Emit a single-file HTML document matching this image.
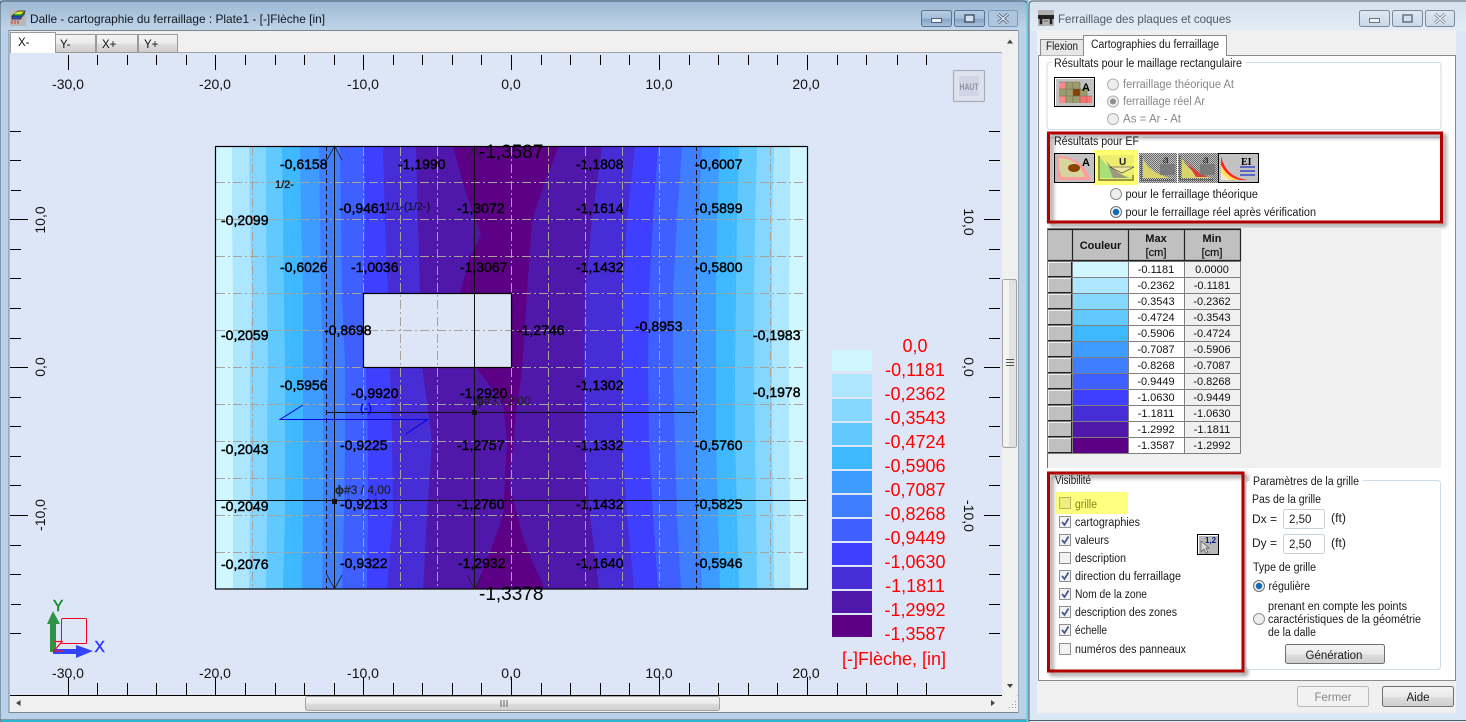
<!DOCTYPE html>
<html><head><meta charset="utf-8"><title>Dalle</title>
<style>
html,body{margin:0;padding:0;background:#b9d1ea;overflow:hidden}
svg{display:block;font-family:"Liberation Sans",sans-serif}
.v{font-size:14px;fill:#000;stroke:#000;stroke-width:.45}
.a{font-size:14px;fill:#111;text-anchor:middle}
.l{font-size:18px;fill:#f00;text-anchor:middle}
.t{font-size:11.5px;fill:#1a1a1a}
.d{font-size:11.5px;fill:#888}
.c{font-size:11px;fill:#111;text-anchor:middle}
.h{font-size:11px;fill:#111;text-anchor:middle;font-weight:bold}
</style></head><body>
<svg width="1466" height="722" viewBox="0 0 1466 722" xmlns="http://www.w3.org/2000/svg">
<defs>
<linearGradient id="tb" x1="0" y1="0" x2="0" y2="1"><stop offset="0" stop-color="#9ab6d3"/><stop offset="1" stop-color="#c1d5e9"/></linearGradient>
<linearGradient id="tb2" x1="0" y1="0" x2="0" y2="1"><stop offset="0" stop-color="#d3e0ee"/><stop offset="1" stop-color="#e3edf7"/></linearGradient>
<linearGradient id="btn" x1="0" y1="0" x2="0" y2="1"><stop offset="0" stop-color="#f4f4f4"/><stop offset=".5" stop-color="#ebebeb"/><stop offset=".55" stop-color="#dcdcdc"/><stop offset="1" stop-color="#cfcfcf"/></linearGradient>
<linearGradient id="wb" x1="0" y1="0" x2="0" y2="1"><stop offset="0" stop-color="#b9cde3"/><stop offset=".5" stop-color="#a3bcd8"/><stop offset=".55" stop-color="#84a3c6"/><stop offset="1" stop-color="#a9c3de"/></linearGradient>
<linearGradient id="wb2" x1="0" y1="0" x2="0" y2="1"><stop offset="0" stop-color="#dde8f3"/><stop offset=".5" stop-color="#d2dfed"/><stop offset="1" stop-color="#c9d8e9"/></linearGradient>
<pattern id="chk" width="2" height="2" patternUnits="userSpaceOnUse"><rect width="2" height="2" fill="#c4c4c4"/><rect width="1" height="1" fill="#6a6a6a"/><rect x="1" y="1" width="1" height="1" fill="#6a6a6a"/></pattern>
</defs>

<!-- LEFT WINDOW FRAME -->
<rect width="1030" height="722" fill="#b9d1ea"/>
<rect x="0" y="0" width="1028" height="31" fill="url(#tb)"/>
<path d="M0 722V5Q0 1 4 1H1023Q1027 1 1027 5V720H0" fill="none" stroke="#4a5a68" stroke-width="1"/>
<rect x="1" y="720" width="1027" height="2" fill="#2bb6cf"/>
<rect x="1026.500" y="2" width="1.500" height="720" fill="#49d3ea"/>
<rect x="9" y="30.500" width="1009" height="682" fill="#f0f0f0" stroke="#7f8488"/>

<!-- title icon -->
<rect x="10" y="10" width="16" height="16" fill="#b8b8b8"/>
<path d="M12 16L18 11H25L21 16Z" fill="#22c040" stroke="#222" stroke-width=".7"/>
<path d="M14 14L18 11.500H24L21 14Z" fill="#f4e020"/>
<path d="M12 16H21V19H12Z" fill="#3050d0" stroke="#222" stroke-width=".7"/>
<path d="M21 16L25 11V14L21 19Z" fill="#555"/>
<path d="M12 20V24M15 20V24M18 20V24" stroke="#d03030"/>
<text x="30" y="23" font-size="12" fill="#101820" textLength="295" lengthAdjust="spacingAndGlyphs">Dalle - cartographie du ferraillage : Plate1 - [-]Flèche [in]</text>

<!-- window controls left -->
<rect x="921.500" y="10.500" width="30" height="16" rx="2" fill="url(#wb)" stroke="#5a7391"/>
<rect x="931.500" y="18.500" width="10" height="4" fill="#eef3f8" stroke="#4d6077"/>
<rect x="954.500" y="10.500" width="30" height="16" rx="2" fill="url(#wb)" stroke="#5a7391"/>
<rect x="965" y="15" width="9" height="7" fill="#d5e0ec" stroke="#33485f" stroke-width="1.300"/>
<rect x="988.500" y="10.500" width="29" height="16" rx="2" fill="#aec5de" stroke="#7f9ab8"/>
<path d="M998 14L1008 23M1008 14L998 23" stroke="#4d6580" stroke-width="3"/><path d="M998 14L1008 23M1008 14L998 23" stroke="#e6edf5" stroke-width="1.200"/>

<!-- tabs left -->
<rect x="10" y="31" width="992" height="22" fill="#f0f0f0"/>
<rect x="55" y="52" width="947" height="1" fill="#a0a4a8"/>
<rect x="55.500" y="34.500" width="40" height="18" fill="url(#btn)" stroke="#9a9a9a"/>
<rect x="96.500" y="34.500" width="41" height="18" fill="url(#btn)" stroke="#9a9a9a"/>
<rect x="138.500" y="34.500" width="39" height="18" fill="url(#btn)" stroke="#9a9a9a"/>
<path d="M10.500 53V32.500H55.500V53" fill="#fff" stroke="#9a9a9a"/>
<text x="18" y="46" font-size="11.500" fill="#111">X-</text>
<text x="60" y="48" font-size="11.500" fill="#111">Y-</text>
<text x="102" y="48" font-size="11.500" fill="#111">X+</text>
<text x="144" y="48" font-size="11.500" fill="#111">Y+</text>

<!-- CANVAS -->
<rect x="10" y="53" width="992" height="642" fill="#dde6f7"/>

<!-- plate bands -->
<rect x="215" y="146" width="592" height="443" fill="#d0f6ff"/>
<polygon fill="#ace6ff" points="232,146 232,220 233,293 233,367 233,441 233,515 233,589 790,589 790,515 789,441 789,367 789,293 790,220 790,146"/>
<polygon fill="#85d7ff" points="249,146 250,220 252,293 250,367 250,441 250,515 249,589 774,589 773,515 772,441 772,367 772,293 772,220 774,146"/>
<polygon fill="#62c9ff" points="266,146 266,220 267,293 268,367 267,441 267,515 266,589 757,589 756,515 755,441 754,367 754,293 755,220 757,146"/>
<polygon fill="#3eb9ff" points="282,146 283,220 284,293 285,367 285,441 285,515 283,589 739,589 737,515 735,441 735,367 736,293 737,220 739,146"/>
<polygon fill="#3e9bff" points="300,146 301,220 303,293 303,367 303,441 303,515 302,589 720,589 718,515 716,441 716,367 716,293 717,220 720,146"/>
<polygon fill="#3f7fff" points="319,146 320,220 321,293 323,367 323,441 323,515 322,589 702,589 698,515 697,441 697,367 697,293 698,220 702,146"/>
<polygon fill="#3f60ff" points="340,146 341,220 342,293 345,367 345,441 344,515 342,589 681,589 677,515 675,441 673,367 673,293 677,220 682,146"/>
<polygon fill="#3f3fff" points="364,146 365,220 363,293 366,367 368,441 368,515 367,589 658,589 653,515 649,441 648,367 649,293 653,220 658,146"/>
<polygon fill="#472dd6" points="383,146 385,220 388,293 390,367 392,441 393,515 387,589 634,589 627,515 622,441 621,367 623,293 627,220 635,146"/>
<polygon fill="#5018aa" points="416,146 418,220 420,293 422,367 432,441 427,515 423,589 599,589 590,515 584,441 584,367 585,293 592,220 602,146"/>
<polygon fill="#5c0086" points="453,146 465,190 481,235 470,257 460,293 463,340 478,370 503,404 507,441 505,478 503,515 490,552 475,589 545,589 533,563 523,537 517,513 510,490 510,470 514,441 515,420 522,370 527,293 532,220 545,182 559,146"/>

<!-- hole fill -->
<rect x="363.500" y="293.500" width="148" height="74" fill="#dde6f7"/>

<!-- grid -->
<path fill="none" stroke="#a8a39d" stroke-width="1" stroke-dasharray="9 3 2 3" d="M252.500 147V589M289.500 147V589M363.500 147V293M400.500 147V589M437.500 147V589M474.500 147V589M511.500 147V293M511.500 368V589M548.500 147V589M585.500 147V589M622.500 147V589M659.500 147V589M733.500 147V589M770.500 147V589M363.500 368V589M216 182.500H806M216 219.500H806M216 256.500H806M216 293.500H806M216 330.500H806M216 367.500H806M216 404.500H806M216 441.500H806M216 478.500H806M216 515.500H806M216 552.500H806"/>
<path fill="none" stroke="#111" stroke-width="1" stroke-dasharray="5 3" d="M326.500 146V589M696.500 146V589"/>

<rect x="215.500" y="146.500" width="592" height="442.500" fill="none" stroke="#000" stroke-width="1.200"/>
<rect x="363.500" y="293.500" width="148" height="74" fill="none" stroke="#000" stroke-width="1.200"/>

<!-- reinforcement lines -->
<path fill="none" stroke="#111" stroke-width="1" d="M334.500 146V589M474.500 146V589M326 412.500H695M215 500.500H806"/>
<path fill="none" stroke="#222" stroke-width=".8" d="M327 160L334.500 146L342 160M467 160L474.500 146L482 160M327 575L334.500 589L342 575M467 575L474.500 589L482 575"/>
<rect x="472" y="410" width="5" height="5" fill="#111"/><rect x="332" y="499" width="5" height="5" fill="#111"/>
<path fill="none" stroke="#0000e0" stroke-width="1" d="M303 405L280 419.500H427.500L406 434"/>
<text x="360" y="412" font-size="12" fill="#0000e6" stroke="#0000e6" stroke-width=".3">(-)</text>
<text x="475" y="405" font-size="12" fill="#222" stroke="#222" stroke-width=".2"><tspan font-weight="bold">ϕ</tspan>#3 / 2,00</text>
<text x="335" y="494" font-size="12" fill="#222" stroke="#222" stroke-width=".2"><tspan font-weight="bold">ϕ</tspan>#3 / 4,00</text>

<!-- values -->
<g class="v">
<text x="280" y="169">-0,6158</text><text x="398" y="169">-1,1990</text><text x="576" y="169">-1,1808</text><text x="695" y="169">-0,6007</text>
<text x="339" y="213">-0,9461</text><text x="457" y="213">-1,3072</text><text x="576" y="213">-1,1614</text><text x="695" y="213">-0,5899</text>
<text x="221" y="225">-0,2099</text>
<text x="280" y="272">-0,6026</text><text x="351" y="272">-1,0036</text><text x="460" y="272">-1,3067</text><text x="576" y="272">-1,1432</text><text x="695" y="272">-0,5800</text>
<text x="324" y="335">-0,8698</text><text x="221" y="340">-0,2059</text><text x="517" y="335">-1,2746</text><text x="635" y="331">-0,8953</text><text x="753" y="340">-0,1983</text>
<text x="280" y="390">-0,5956</text><text x="351" y="398">-0,9920</text><text x="460" y="398">-1,2920</text><text x="576" y="390">-1,1302</text><text x="753" y="397">-0,1978</text>
<text x="221" y="454">-0,2043</text><text x="340" y="450">-0,9225</text><text x="457" y="450">-1,2757</text><text x="576" y="450">-1,1332</text><text x="695" y="450">-0,5760</text>
<text x="221" y="511">-0,2049</text><text x="340" y="509">-0,9213</text><text x="457" y="509">-1,2760</text><text x="576" y="509">-1,1432</text><text x="695" y="509">-0,5825</text>
<text x="221" y="569">-0,2076</text><text x="340" y="568">-0,9322</text><text x="458" y="568">-1,2932</text><text x="576" y="568">-1,1640</text><text x="695" y="568">-0,5946</text>
</g>
<text x="275" y="188" font-size="11" fill="#111" stroke="#111" stroke-width=".35">1/2-</text>
<text x="385" y="210" font-size="11" fill="#14143c" stroke="#14143c" stroke-width=".3">1/1-(1/2-)</text>
<text x="479" y="158" font-size="19" fill="#000">-1,3587</text>
<text x="479" y="600" font-size="19" fill="#000">-1,3378</text>

<!-- axis ticks -->
<path fill="none" stroke="#000" stroke-width="1" d="M68.500 55V70M215.500 55V70M363.500 55V70M511.500 55V70M659.500 55V70M807.500 55V70M97.500 55V65M127.500 55V65M156.500 55V65M186.500 55V65M245.500 55V65M275.500 55V65M304.500 55V65M334.500 55V65M393.500 55V65M422.500 55V65M452.500 55V65M481.500 55V65M541.500 55V65M570.500 55V65M600.500 55V65M629.500 55V65M689.500 55V65M718.500 55V65M748.500 55V65M777.500 55V65M837.500 55V65M866.500 55V65M897.500 55V65M926.500 55V65"/>
<path fill="none" stroke="#000" stroke-width="1" d="M68.500 677V695M215.500 677V695M363.500 677V695M511.500 677V695M659.500 677V695M807.500 677V695M97.500 683V695M127.500 683V695M156.500 683V695M186.500 683V695M245.500 683V695M275.500 683V695M304.500 683V695M334.500 683V695M393.500 683V695M422.500 683V695M452.500 683V695M481.500 683V695M541.500 683V695M570.500 683V695M600.500 683V695M629.500 683V695M689.500 683V695M718.500 683V695M748.500 683V695M777.500 683V695M837.500 683V695M866.500 683V695M897.500 683V695M926.500 683V695"/>
<path fill="none" stroke="#000" stroke-width="1" d="M10 219.500H28M10 367.500H28M10 515.500H28M10 131.500H21M10 160.500H21M11 190.500H21M10 249.500H21M10 278.500H21M10 308.500H21M10 338.500H21M10 397.500H21M10 426.500H21M10 456.500H21M10 485.500H21M10 545.500H21M10 574.500H21M11 604.500H21M10 633.500H21"/>
<path fill="none" stroke="#000" stroke-width="1" d="M984 219.500H1000M984 367.500H1000M984 515.500H1000M989 131.500H1000M989 160.500H1000M989 190.500H1000M989 249.500H1000M989 278.500H1000M989 308.500H1000M989 338.500H1000M989 397.500H1000M989 426.500H1000M989 456.500H1000M989 485.500H1000M989 545.500H1000M989 574.500H1000M989 604.500H1000M989 633.500H1000"/>
<g class="a">
<text x="68" y="89">-30,0</text><text x="215" y="89">-20,0</text><text x="363" y="89">-10,0</text><text x="511" y="89">0,0</text><text x="659" y="89">10,0</text><text x="806" y="89">20,0</text>
<text x="68" y="678">-30,0</text><text x="215" y="678">-20,0</text><text x="363" y="678">-10,0</text><text x="511" y="678">0,0</text><text x="659" y="678">10,0</text><text x="806" y="678">20,0</text>
<text transform="translate(45,220) rotate(-90)">10,0</text><text transform="translate(45,367) rotate(-90)">0,0</text><text transform="translate(45,515) rotate(-90)">-10,0</text>
<text transform="translate(964,222) rotate(90)">10,0</text><text transform="translate(964,367) rotate(90)">0,0</text><text transform="translate(964,516) rotate(90)">-10,0</text>
</g>

<!-- HAUT cube -->
<rect x="953.500" y="70.500" width="31" height="31" rx="1" fill="#dde2ee" stroke="#a8aebc" stroke-width="1.200"/>
<rect x="959" y="76" width="20" height="20" fill="#d0d6e5"/>
<text x="969" y="90" font-size="9" font-weight="bold" fill="#8d93a3" text-anchor="middle" textLength="19" lengthAdjust="spacingAndGlyphs">HAUT</text>

<!-- axis glyph -->
<path d="M50 652V624H47L53 611L60 624H56V652Z" fill="#2e9444"/>
<rect x="61.500" y="618.500" width="25" height="25" rx="1" fill="none" stroke="#f00222" stroke-width="1"/>
<path d="M53 654V649H76V645L93 651L76 658V654Z" fill="#3344ff"/>
<path d="M54 641.500H62L54 651H63" fill="none" stroke="#f01020" stroke-width="1.300"/>
<text x="53" y="611" font-size="15.500" fill="#119028" stroke="#119028" stroke-width=".5">Y</text>
<text x="94.500" y="652" font-size="15.500" fill="#2a3cff" stroke="#2a3cff" stroke-width=".5">X</text>

<!-- legend -->
<rect x="832" y="350" width="40" height="21" fill="#d0f6ff"/><rect x="832" y="374" width="40" height="23" fill="#ace6ff"/><rect x="832" y="399" width="40" height="22" fill="#85d7ff"/><rect x="832" y="423" width="40" height="22" fill="#62c9ff"/><rect x="832" y="447" width="40" height="22" fill="#3eb9ff"/><rect x="832" y="471" width="40" height="22" fill="#3e9bff"/><rect x="832" y="495" width="40" height="22" fill="#3f7fff"/><rect x="832" y="519" width="40" height="22" fill="#3f60ff"/><rect x="832" y="543" width="40" height="22" fill="#3f3fff"/><rect x="832" y="567" width="40" height="22" fill="#472dd6"/><rect x="832" y="591" width="40" height="22" fill="#5018aa"/><rect x="832" y="615" width="40" height="22" fill="#5c0086"/>
<g class="l">
<text x="915" y="352">0,0</text><text x="915" y="376">-0,1181</text><text x="915" y="400">-0,2362</text><text x="915" y="424">-0,3543</text><text x="915" y="448">-0,4724</text><text x="915" y="472">-0,5906</text><text x="915" y="496">-0,7087</text><text x="915" y="520">-0,8268</text><text x="915" y="544">-0,9449</text><text x="915" y="568">-1,0630</text><text x="915" y="592">-1,1811</text><text x="915" y="616">-1,2992</text><text x="915" y="640">-1,3587</text>
</g>
<text x="894" y="665" font-size="18" fill="#f00" text-anchor="middle">[-]Flèche, [in]</text>

<!-- vertical scrollbar -->
<rect x="1002" y="31" width="16" height="664" fill="#f0f0f0"/>
<rect x="1002.500" y="279.500" width="14" height="168" rx="2" fill="#e2e2e2" stroke="#a4a4a4"/>
<rect x="1003" y="280" width="6" height="166" fill="#f4f4f4"/>
<path d="M1006 359.500H1014M1006 362.500H1014M1006 365.500H1014" stroke="#555"/>
<path d="M1007 43.500H1013L1010 39.500Z" fill="#444"/><path d="M1007 684H1013L1010 688Z" fill="#444"/>
<!-- horizontal scrollbar -->
<rect x="10" y="695" width="992" height="1" fill="#000"/>
<rect x="10" y="696" width="1008" height="16" fill="#f0f0f0"/>
<rect x="305.500" y="696.500" width="414" height="14" rx="2" fill="url(#btn)" stroke="#a4a4a4"/>
<path d="M501 700V707M504 700V707M507 700V707" stroke="#666"/>
<path d="M20.500 700V706L16 703Z" fill="#444"/><path d="M991 700V706L995 703Z" fill="#444"/>
<path d="M1009 707h1v1h-1zM1012 704h1v1h-1zM1012 707h1v1h-1zM1015 701h1v1h-1zM1015 704h1v1h-1zM1015 707h1v1h-1z" fill="#999"/>

<!-- RIGHT WINDOW -->
<rect x="1029" y="0" width="437" height="722" fill="#dbe7f4"/>
<rect x="1029" y="1" width="437" height="30" fill="url(#tb2)"/>
<path d="M1029 722V5Q1029 1 1033 1H1466M1029 720.500H1466" fill="none" stroke="#555d66" stroke-width="1"/>
<rect x="1037" y="30" width="419" height="683" fill="#f0f0f0"/>
<!-- title -->
<rect x="1038" y="10" width="16" height="16" fill="#b0b0b0"/>
<path d="M1038 15H1054V19H1038Z" fill="#222"/><path d="M1040 19V24H1042V19ZM1050 19V24H1052V19ZM1044 21H1048" fill="#222" stroke="#222" stroke-width=".6"/>
<text x="1058" y="23" font-size="12" fill="#4f5963" textLength="173" lengthAdjust="spacingAndGlyphs">Ferraillage des plaques et coques</text>
<rect x="1359.500" y="10.500" width="30" height="16" rx="2" fill="url(#wb2)" stroke="#7c8a98"/>
<rect x="1369.500" y="18.500" width="10" height="4" fill="#f0f3f7" stroke="#6a7683"/>
<rect x="1392.500" y="10.500" width="30" height="16" rx="2" fill="url(#wb2)" stroke="#7c8a98"/>
<rect x="1403" y="15" width="9" height="7" fill="none" stroke="#55616e" stroke-width="1.300"/>
<rect x="1425.500" y="10.500" width="29" height="16" rx="2" fill="url(#wb2)" stroke="#7c8a98"/>
<path d="M1435 14L1445 23M1445 14L1435 23" stroke="#7d8a97" stroke-width="3"/><path d="M1435 14L1445 23M1445 14L1435 23" stroke="#f2f5f8" stroke-width="1.200"/>

<!-- tabs panel -->
<rect x="1038.500" y="55.500" width="417" height="625" fill="#fff" stroke="#8a8a8a"/>
<path d="M1040.500 55.500V39.500H1084V55.500" fill="#e7e7e7" stroke="#8a8a8a"/>
<path d="M1083.500 56V35.500H1226.500V56" fill="#fff" stroke="#8a8a8a"/>
<rect x="1084" y="54" width="142" height="3" fill="#fff"/>
<text x="1046" y="50" class="t" textLength="32" lengthAdjust="spacingAndGlyphs">Flexion</text>
<text x="1091" y="48" class="t" textLength="128" lengthAdjust="spacingAndGlyphs">Cartographies du ferraillage</text>

<!-- group 1 -->
<rect x="1047" y="62.500" width="394" height="67" rx="3" fill="#fff" stroke="#d0dbe8"/>
<rect x="1052" y="58" width="194" height="10" fill="#fff"/>
<text x="1054" y="67" class="t" textLength="188" lengthAdjust="spacingAndGlyphs">Résultats pour le maillage rectangulaire</text>
<!-- icon A grid -->
<rect x="1054" y="77" width="41" height="30" fill="#000"/><rect x="1055" y="78" width="39" height="28" fill="#fff"/>
<rect x="1056" y="79" width="38" height="27" fill="#c2c2c2"/>
<path d="M1059 82h7v7h-7z" fill="#ff8a8a"/><path d="M1066 82h7v7h-7zM1073 82h7v7h-7z" fill="#9c9c6e"/>
<path d="M1059 89h7v7h-7zM1066 89h7v7h-7zM1080 89h7v7h-7z" fill="#9c9c6e"/><path d="M1073 89h7v7h-7z" fill="#8b4000"/>
<path d="M1059 96h7v7h-7z" fill="#ff8a8a"/><path d="M1066 96h7v7h-7zM1073 96h7v7h-7z" fill="#9c9c6e"/><path d="M1080 96h7v7h-7z" fill="#ff6a6a"/><path d="M1087 96h5v7h-5z" fill="#ff7a7a"/>
<path d="M1059 82H1080M1059 89H1087M1059 96H1092M1066 82V103M1073 82V103M1080 82V103M1087 89V103" stroke="#6e6e50" stroke-width=".6" fill="none"/>
<text x="1082" y="91" font-size="11" font-weight="bold" fill="#000">A</text>
<g fill="#eee" stroke="#b0b0b0"><circle cx="1113" cy="84.500" r="5.500"/><circle cx="1113" cy="101.500" r="5.500"/><circle cx="1113" cy="119" r="5.500"/></g>
<circle cx="1113" cy="101.500" r="3" fill="#8f8f8f"/>
<text x="1123" y="88" class="d" textLength="111" lengthAdjust="spacingAndGlyphs">ferraillage théorique At</text>
<text x="1123" y="105" class="d" textLength="82" lengthAdjust="spacingAndGlyphs">ferraillage réel Ar</text>
<text x="1123" y="122.500" class="d" textLength="58" lengthAdjust="spacingAndGlyphs">As = Ar - At</text>

<!-- group EF -->
<rect x="1047" y="137.500" width="394" height="84" fill="#fff" stroke="#d0dbe8"/>
<rect x="1052" y="134" width="90" height="10" fill="#fff"/>
<text x="1054" y="145" class="t" textLength="85" lengthAdjust="spacingAndGlyphs">Résultats pour EF</text>
<rect x="1094" y="150" width="44" height="35" fill="#ffff70"/>
<!-- icon 1 -->
<rect x="1054" y="153" width="41" height="30" fill="#000"/><rect x="1055" y="154" width="39" height="28" fill="#c2c2c2"/>
<path d="M1057 156Q1082 156 1091 180H1057Z" fill="#ff9c9c"/><path d="M1059 158Q1078 158 1085 177H1062Q1058 170 1059 158Z" fill="#d8d4a0"/>
<ellipse cx="1074" cy="168" rx="6" ry="4" fill="#8b4500"/><text x="1082" y="166" font-size="11" font-weight="bold">A</text>
<!-- icon 2 -->
<rect x="1098" y="155" width="36" height="26" fill="#eded70"/>
<path d="M1099 156V180H1133V175" fill="none" stroke="#6a6a20" stroke-width="1.200"/>
<path d="M1100 157Q1110 172 1132 178H1100Z" fill="#a8e078"/><path d="M1106 160Q1112 170 1128 178H1113Z" fill="#9a9a80"/>
<path d="M1110 167H1134L1122 173Z" fill="#f0e8a0" stroke="#333" stroke-width=".6"/><text x="1119" y="165" font-size="10" font-weight="bold" fill="#222">U</text>
<!-- icon 3,4 disabled -->
<rect x="1139" y="153" width="38" height="30" fill="url(#chk)"/>
<path d="M1141 156V180H1174" fill="none" stroke="#111" stroke-dasharray="1 1"/><path d="M1143 158Q1148 172 1170 178H1143Z" fill="#d8d46a"/><rect x="1160" y="164" width="15" height="11" fill="#7a7a7a"/><text x="1163" y="163" font-size="10" font-style="italic" fill="#222">a</text>
<rect x="1178" y="153" width="40" height="30" fill="url(#chk)"/>
<path d="M1180 156V180H1214" fill="none" stroke="#111" stroke-dasharray="1 1"/><path d="M1182 158Q1188 174 1212 178H1182Z" fill="#d8d46a"/><path d="M1184 158Q1192 170 1208 177H1196Z" fill="#d84040"/><rect x="1200" y="164" width="15" height="11" fill="#7a7a7a"/><text x="1203" y="163" font-size="10" font-style="italic" fill="#222">a</text>
<!-- icon 5 -->
<rect x="1218" y="153" width="41" height="30" fill="#000"/><rect x="1219" y="154" width="39" height="28" fill="#c2c2c2"/>
<path d="M1221 156Q1226 178 1248 180H1221Z" fill="#ff2020"/><path d="M1221 165Q1228 178 1240 180H1221Z" fill="#ffe060"/><path d="M1221 172Q1225 178 1232 180H1221Z" fill="#f0e8d0"/>
<text x="1241" y="165" font-size="10" font-weight="bold" font-family="Liberation Serif">EI</text>
<path d="M1240 167H1255M1240 171H1255M1240 175H1255" stroke="#2030c0" stroke-width="1.200"/>
<!-- radios EF -->
<circle cx="1116" cy="194" r="5.500" fill="#eee" stroke="#8e8e8e"/>
<circle cx="1116" cy="212" r="5.500" fill="#eee" stroke="#707070"/><circle cx="1116" cy="212" r="3.200" fill="#0d6eb5"/>
<text x="1125.500" y="198" class="t" textLength="132.500" lengthAdjust="spacingAndGlyphs">pour le ferraillage théorique</text>
<text x="1125.500" y="216" class="t" textLength="190.500" lengthAdjust="spacingAndGlyphs">pour le ferraillage réel après vérification</text>
<rect x="1048.500" y="133" width="393" height="89" fill="none" stroke="#b00000" stroke-width="3" style="filter:drop-shadow(3px 3px 2px rgba(0,0,0,.5))"/>

<!-- TABLE -->
<rect x="1047" y="228" width="394" height="240" fill="#f0f0f0"/>
<path d="M1047.500 228V468" stroke="#707070"/>
<rect x="1047" y="228" width="194" height="226" fill="#7f7f7f"/>
<rect x="1048" y="230" width="193" height="31" fill="#c0c0c0"/>
<path d="M1072.500 229V261M1128.500 229V261M1184.500 229V261M1240.500 229V261M1048 260.500H1241M1048 229.500H1241" stroke="#222" stroke-width="1.200" fill="none"/>
<text x="1100.500" y="249" class="h">Couleur</text><text x="1156" y="242" class="h">Max</text><text x="1156" y="256" class="h" style="font-weight:normal;stroke:#111;stroke-width:.2">[cm]</text><text x="1212" y="242" class="h">Min</text><text x="1212" y="256" class="h" style="font-weight:normal;stroke:#111;stroke-width:.2">[cm]</text>
<g fill="#c0c0c0">
<rect x="1048" y="262" width="24" height="15"/><rect x="1048" y="278" width="24" height="15"/><rect x="1048" y="294" width="24" height="15"/><rect x="1048" y="310" width="24" height="15"/><rect x="1048" y="326" width="24" height="15"/><rect x="1048" y="342" width="24" height="15"/><rect x="1048" y="358" width="24" height="15"/><rect x="1048" y="374" width="24" height="15"/><rect x="1048" y="390" width="24" height="15"/><rect x="1048" y="406" width="24" height="15"/><rect x="1048" y="422" width="24" height="15"/><rect x="1048" y="438" width="24" height="15"/>
</g>
<path fill="none" stroke="#222" d="M1048 276.500H1071.500V262M1048 292.500H1071.500V278M1048 308.500H1071.500V294M1048 324.500H1071.500V310M1048 340.500H1071.500V326M1048 356.500H1071.500V342M1048 372.500H1071.500V358M1048 388.500H1071.500V374M1048 404.500H1071.500V390M1048 420.500H1071.500V406M1048 436.500H1071.500V422M1048 452.500H1071.500V438"/>
<path fill="none" stroke="#eee" d="M1048.500 276V262.500H1071M1048.500 292V278.500H1071M1048.500 308V294.500H1071M1048.500 324V310.500H1071M1048.500 340V326.500H1071M1048.500 356V342.500H1071M1048.500 372V358.500H1071M1048.500 388V374.500H1071M1048.500 404V390.500H1071M1048.500 420V406.500H1071M1048.500 436V422.500H1071M1048.500 452V438.500H1071"/>
<rect x="1073" y="262" width="55" height="15" fill="#d0f6ff"/><rect x="1073" y="278" width="55" height="15" fill="#ace6ff"/><rect x="1073" y="294" width="55" height="15" fill="#85d7ff"/><rect x="1073" y="310" width="55" height="15" fill="#62c9ff"/><rect x="1073" y="326" width="55" height="15" fill="#3eb9ff"/><rect x="1073" y="342" width="55" height="15" fill="#3e9bff"/><rect x="1073" y="358" width="55" height="15" fill="#3f7fff"/><rect x="1073" y="374" width="55" height="15" fill="#3f60ff"/><rect x="1073" y="390" width="55" height="15" fill="#3f3fff"/><rect x="1073" y="406" width="55" height="15" fill="#472dd6"/><rect x="1073" y="422" width="55" height="15" fill="#5018aa"/><rect x="1073" y="438" width="55" height="15" fill="#5c0086"/>
<g fill="#fff"><rect x="1129" y="262" width="55" height="15"/><rect x="1129" y="278" width="55" height="15"/><rect x="1129" y="294" width="55" height="15"/><rect x="1129" y="310" width="55" height="15"/><rect x="1129" y="326" width="55" height="15"/><rect x="1129" y="342" width="55" height="15"/><rect x="1129" y="358" width="55" height="15"/><rect x="1129" y="374" width="55" height="15"/><rect x="1129" y="390" width="55" height="15"/><rect x="1129" y="406" width="55" height="15"/><rect x="1129" y="422" width="55" height="15"/><rect x="1129" y="438" width="55" height="15"/></g>
<g fill="#f0f0f0"><rect x="1185" y="262" width="55" height="15"/><rect x="1185" y="278" width="55" height="15"/><rect x="1185" y="294" width="55" height="15"/><rect x="1185" y="310" width="55" height="15"/><rect x="1185" y="326" width="55" height="15"/><rect x="1185" y="342" width="55" height="15"/><rect x="1185" y="358" width="55" height="15"/><rect x="1185" y="374" width="55" height="15"/><rect x="1185" y="390" width="55" height="15"/><rect x="1185" y="406" width="55" height="15"/><rect x="1185" y="422" width="55" height="15"/><rect x="1185" y="438" width="55" height="15"/></g>
<g class="c">
<text x="1156" y="273">-0.1181</text><text x="1212" y="273">0.0000</text>
<text x="1156" y="289">-0.2362</text><text x="1212" y="289">-0.1181</text>
<text x="1156" y="305">-0.3543</text><text x="1212" y="305">-0.2362</text>
<text x="1156" y="321">-0.4724</text><text x="1212" y="321">-0.3543</text>
<text x="1156" y="337">-0.5906</text><text x="1212" y="337">-0.4724</text>
<text x="1156" y="353">-0.7087</text><text x="1212" y="353">-0.5906</text>
<text x="1156" y="369">-0.8268</text><text x="1212" y="369">-0.7087</text>
<text x="1156" y="385">-0.9449</text><text x="1212" y="385">-0.8268</text>
<text x="1156" y="401">-1.0630</text><text x="1212" y="401">-0.9449</text>
<text x="1156" y="417">-1.1811</text><text x="1212" y="417">-1.0630</text>
<text x="1156" y="433">-1.2992</text><text x="1212" y="433">-1.1811</text>
<text x="1156" y="449">-1.3587</text><text x="1212" y="449">-1.2992</text>
</g>

<!-- VISIBILITE -->
<rect x="1056" y="492" width="72" height="22" fill="#ffff80"/>
<text x="1055" y="484" class="t" textLength="36" lengthAdjust="spacingAndGlyphs">Visibilité</text>
<g fill="#f2f2f2" stroke="#8e8f8f">
<rect x="1059.500" y="497.500" width="11" height="11" fill="#eeee78" stroke="#b8b860"/>
<rect x="1059.500" y="516.500" width="11" height="11"/><rect x="1059.500" y="534.500" width="11" height="11"/><rect x="1059.500" y="552.500" width="11" height="11"/><rect x="1059.500" y="570.500" width="11" height="11"/><rect x="1059.500" y="588.500" width="11" height="11"/><rect x="1059.500" y="606.500" width="11" height="11"/><rect x="1059.500" y="624.500" width="11" height="11"/><rect x="1059.500" y="643.500" width="11" height="11"/>
</g>
<path fill="none" stroke="#47598f" stroke-width="1.800" d="M1062 522L1064.500 525L1068.500 518.500M1062 540L1064.500 543L1068.500 536.500M1062 576L1064.500 579L1068.500 572.500M1062 594L1064.500 597L1068.500 590.500M1062 612L1064.500 615L1068.500 608.500M1062 630L1064.500 633L1068.500 626.500"/>
<text x="1075" y="508" font-size="11.500" fill="#85851a" textLength="22" lengthAdjust="spacingAndGlyphs">grille</text>
<text x="1075" y="526" class="t" textLength="65" lengthAdjust="spacingAndGlyphs">cartographies</text>
<text x="1075" y="544" class="t" textLength="34" lengthAdjust="spacingAndGlyphs">valeurs</text>
<text x="1075" y="562" class="t" textLength="51" lengthAdjust="spacingAndGlyphs">description</text>
<text x="1075" y="580" class="t" textLength="106" lengthAdjust="spacingAndGlyphs">direction du ferraillage</text>
<text x="1075" y="598" class="t" textLength="72" lengthAdjust="spacingAndGlyphs">Nom de la zone</text>
<text x="1075" y="616" class="t" textLength="102" lengthAdjust="spacingAndGlyphs">description des zones</text>
<text x="1075" y="634" class="t" textLength="32" lengthAdjust="spacingAndGlyphs">échelle</text>
<text x="1075" y="653" class="t" textLength="111" lengthAdjust="spacingAndGlyphs">numéros des panneaux</text>
<rect x="1197" y="534" width="22" height="21" fill="#000"/><rect x="1198" y="535" width="20" height="19" fill="#fff"/><rect x="1199" y="536" width="19" height="18" fill="#b8b8b8"/>
<path d="M1201 541V552L1204 549L1206 553.500L1208 552.500L1206 548H1209Z" fill="#ddd" stroke="#555" stroke-width=".7"/>
<text x="1205" y="543" font-size="8" font-weight="bold" fill="#001a80">1,2</text>
<rect x="1048.500" y="473" width="194.500" height="198" fill="none" stroke="#b00000" stroke-width="3" style="filter:drop-shadow(3px 3px 2px rgba(0,0,0,.5))"/>

<!-- GRID PARAMS -->
<rect x="1246.500" y="480.500" width="194" height="189" rx="3" fill="#fff" stroke="#d0dbe8"/>
<rect x="1250" y="476" width="113" height="10" fill="#fff"/>
<text x="1253" y="485" class="t" textLength="106" lengthAdjust="spacingAndGlyphs">Paramètres de la grille</text>
<text x="1252" y="503" class="t" textLength="69" lengthAdjust="spacingAndGlyphs">Pas de la grille</text>
<text x="1252" y="523" class="t" textLength="25" lengthAdjust="spacingAndGlyphs">Dx =</text>
<rect x="1283.500" y="509.500" width="41" height="19" rx="2" fill="#fff" stroke="#c8d0d8"/>
<text x="1289" y="523" class="t">2,50</text>
<text x="1331" y="522" class="t" textLength="15" lengthAdjust="spacingAndGlyphs">(ft)</text>
<text x="1252" y="547" class="t" textLength="25" lengthAdjust="spacingAndGlyphs">Dy =</text>
<rect x="1283.500" y="534.500" width="41" height="19" rx="2" fill="#fff" stroke="#c8d0d8"/>
<text x="1289" y="548" class="t">2,50</text>
<text x="1331" y="547" class="t" textLength="15" lengthAdjust="spacingAndGlyphs">(ft)</text>
<text x="1253" y="571" class="t" textLength="63" lengthAdjust="spacingAndGlyphs">Type de grille</text>
<circle cx="1259" cy="586" r="5.500" fill="#eee" stroke="#707070"/><circle cx="1259" cy="586" r="3.200" fill="#0d6eb5"/>
<text x="1268.500" y="590" class="t" textLength="41.500" lengthAdjust="spacingAndGlyphs">régulière</text>
<circle cx="1259" cy="619" r="5.500" fill="#eee" stroke="#8e8e8e"/>
<text x="1268" y="610" class="t" textLength="139" lengthAdjust="spacingAndGlyphs">prenant en compte les points</text>
<text x="1268" y="623" class="t" textLength="153" lengthAdjust="spacingAndGlyphs">caractéristiques de la géométrie</text>
<text x="1268" y="636" class="t" textLength="48" lengthAdjust="spacingAndGlyphs">de la dalle</text>
<rect x="1285.500" y="644.500" width="99" height="19" rx="2" fill="url(#btn)" stroke="#707070"/>
<text x="1334" y="659" class="t" text-anchor="middle">Génération</text>

<!-- bottom buttons -->
<rect x="1297.500" y="686.500" width="71" height="20" rx="2" fill="#f2f2f2" stroke="#b8b8b8"/>
<text x="1333" y="701" class="d" text-anchor="middle">Fermer</text>
<rect x="1382.500" y="686.500" width="71" height="20" rx="2" fill="url(#btn)" stroke="#6f6f6f"/>
<text x="1418" y="701" class="t" text-anchor="middle">Aide</text>
</svg>
</body></html>
